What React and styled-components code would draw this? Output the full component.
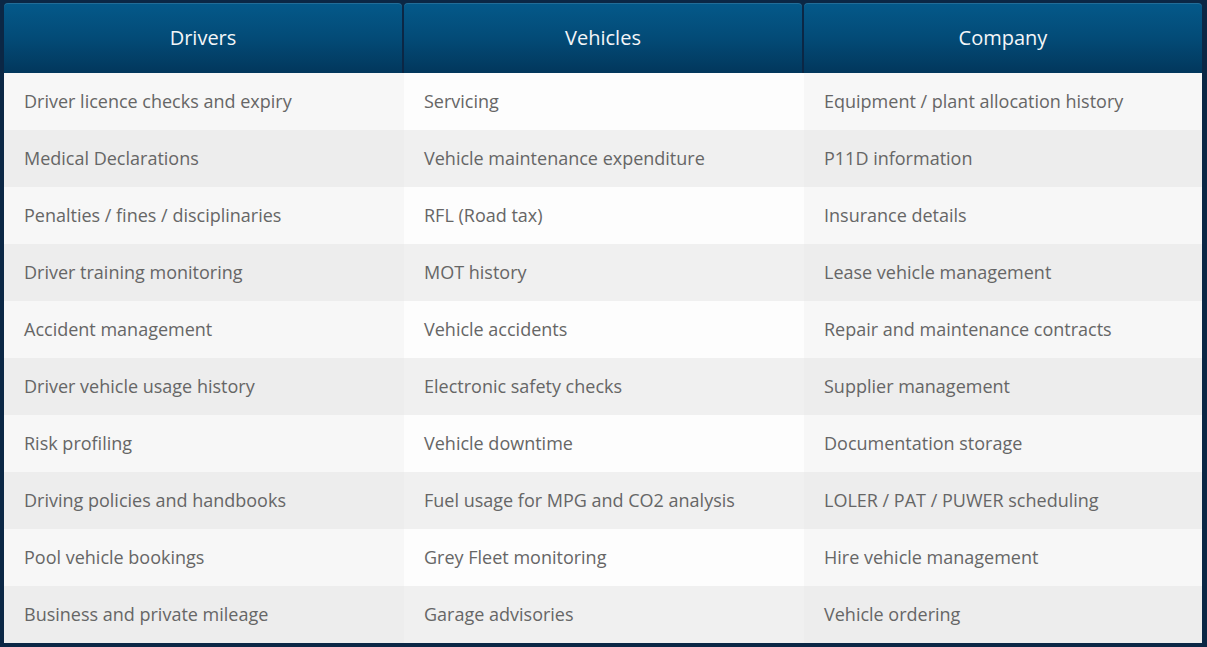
import React from "react";
import styled, { createGlobalStyle } from "styled-components";

const Global = createGlobalStyle`
  html, body { margin: 0; padding: 0; background: #0b2745; }
  body { font-family: "Open Sans", "Noto Sans", sans-serif; }
`;

const Page = styled.div`
  padding: 3px 5px 4px 4px;
  background: #0b2745;
`;

const Table = styled.div`
  display: flex;
  flex-direction: column;
`;

const HeadRow = styled.div`
  display: grid;
  grid-template-columns: 398px 398px 398px;
  column-gap: 2px;
`;

const HeadCell = styled.div`
  height: 70px;
  display: flex;
  align-items: center;
  justify-content: center;
  border-radius: 4px 4px 0 0;
  background: linear-gradient(to bottom, #04598a 0%, #034b77 50%, #02375c 100%);
  box-shadow: inset 0 1px 0 rgba(255, 255, 255, 0.12);
  color: #f4f6f8;
  font-size: 20px;
  font-weight: 400;
  padding-bottom: 1px;
  box-sizing: border-box;
`;

const Row = styled.div`
  display: grid;
  grid-template-columns: 400px 400px 398px;
  height: 57px;
`;

const Cell = styled.div`
  display: flex;
  align-items: center;
  padding: 0 20px 2px;
  font-size: 18px;
  color: #666666;
  background: ${(p) =>
    p.$even
      ? p.$mid
        ? "#f0f0f0"
        : "#ededed"
      : p.$mid
      ? "#fdfdfd"
      : "#f7f7f7"};
`;

const heads = ["Drivers", "Vehicles", "Company"];

const rows = [
  ["Driver licence checks and expiry", "Servicing", "Equipment / plant allocation history"],
  ["Medical Declarations", "Vehicle maintenance expenditure", "P11D information"],
  ["Penalties / fines / disciplinaries", "RFL (Road tax)", "Insurance details"],
  ["Driver training monitoring", "MOT history", "Lease vehicle management"],
  ["Accident management", "Vehicle accidents", "Repair and maintenance contracts"],
  ["Driver vehicle usage history", "Electronic safety checks", "Supplier management"],
  ["Risk profiling", "Vehicle downtime", "Documentation storage"],
  ["Driving policies and handbooks", "Fuel usage for MPG and CO2 analysis", "LOLER / PAT / PUWER scheduling"],
  ["Pool vehicle bookings", "Grey Fleet monitoring", "Hire vehicle management"],
  ["Business and private mileage", "Garage advisories", "Vehicle ordering"],
];

export default function App() {
  return (
    <>
      <Global />
      <Page>
        <Table>
          <HeadRow>
            {heads.map((h) => (
              <HeadCell key={h}>{h}</HeadCell>
            ))}
          </HeadRow>
          {rows.map((r, i) => (
            <Row key={i}>
              {r.map((c, j) => (
                <Cell key={j} $even={i % 2 === 1} $mid={j === 1}>
                  {c}
                </Cell>
              ))}
            </Row>
          ))}
        </Table>
      </Page>
    </>
  );
}
